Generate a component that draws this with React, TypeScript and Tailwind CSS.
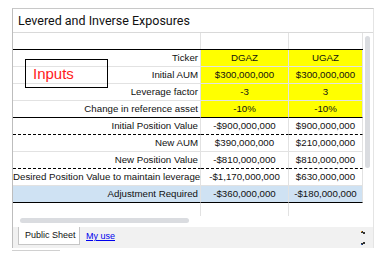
import clsx from "clsx";

type Row = {
	label: string;
	a: string;
	b: string;
	fill?: "yellow" | "blue";
	line: "gray" | "black" | "dashed";
};

const rows: Row[] = [
	{ label: "Ticker", a: "DGAZ", b: "UGAZ", fill: "yellow", line: "gray" },
	{ label: "Initial AUM", a: "$300,000,000", b: "$300,000,000", fill: "yellow", line: "gray" },
	{ label: "Leverage factor", a: "-3", b: "3", fill: "yellow", line: "gray" },
	{ label: "Change in reference asset", a: "-10%", b: "-10%", fill: "yellow", line: "black" },
	{ label: "Initial Position Value", a: "-$900,000,000", b: "$900,000,000", line: "dashed" },
	{ label: "New AUM", a: "$390,000,000", b: "$210,000,000", line: "gray" },
	{ label: "New Position Value", a: "-$810,000,000", b: "$810,000,000", line: "dashed" },
	{ label: "Desired Position Value to maintain leverage", a: "-$1,170,000,000", b: "$630,000,000", line: "gray" },
	{ label: "Adjustment Required", a: "-$360,000,000", b: "-$180,000,000", fill: "blue", line: "black" },
];

// One spreadsheet row: label column plus the two ticker columns
function SheetRow({ row }: { row: Row }) {
	const cell = clsx(
		"h-[17px] border-b border-r border-r-[#e2e2e2] leading-[16px] text-center",
		row.line === "gray" && "border-b-[#e2e2e2]",
		row.line === "black" && "border-b-black",
		row.line === "dashed" && "border-b-black [border-bottom-style:dashed]",
	);
	const value = clsx(cell, row.fill === "yellow" && "bg-[#ffff00]", row.fill === "blue" && "bg-[#cfe2f3]");

	return (
		<div className="flex">
			<div className={ clsx(cell, "w-[188px] !text-right pr-[2px] whitespace-nowrap", row.fill === "blue" && "bg-[#cfe2f3]") }>{ row.label }</div>
			<div className={ clsx(value, "w-[88px]") }>{ row.a }</div>
			<div className={ clsx(value, "w-[74px]") }>{ row.b }</div>
		</div>
	);
}

export default function App() {
	return (
		<div className="w-[384px] h-[258px] bg-white pt-2 pl-3 font-['Liberation_Sans',Arial,sans-serif] text-[#111]">

			{/* Embedded sheet widget */}
			<div className="w-[362px] border-l border-t border-r border-l-[#bdbdbd] border-t-[#c8c8c8] border-r-[#e4e4e4]">

				{/* Title */}
				<div className="h-[24px] border-b border-[#d9d9d9] pl-[5px] pt-[4px] text-[12.5px] leading-[16px] font-['Roboto',Arial,sans-serif]">
					Levered and Inverse Exposures
				</div>

				<div className="flex">

					{/* Grid */}
					<div className="relative w-[350px] text-[9.7px]">
						<div className="flex h-[17px] border-b border-black">
							<div className="w-[188px] border-r border-[#e2e2e2]" />
							<div className="w-[88px] border-r border-[#e2e2e2]" />
							<div className="w-[74px] border-r border-[#e2e2e2]" />
						</div>
						{ rows.map(row => <SheetRow key={ row.label } row={ row } />) }
						<div className="flex h-[13px]">
							<div className="w-[188px] border-r border-[#e2e2e2]" />
							<div className="w-[88px] border-r border-[#e2e2e2]" />
						</div>

						{/* Drawn "Inputs" box */}
						<div className="absolute left-[12px] top-[26px] w-[83px] h-[29px] border border-black pl-[7px] pt-[6px] text-[15px] leading-[16px] text-[#ff1a1a]">
							Inputs
						</div>
					</div>

					{/* Vertical scrollbar */}
					<div className="pl-[2px] pt-[3px]">
						<div className="w-[5px] h-[132px] rounded-full bg-[#dadce0]" />
					</div>
				</div>

				{/* Horizontal scrollbar */}
				<div className="h-[10px] pl-[7px] pt-[2px]">
					<div className="w-[169px] h-[5px] rounded-full bg-[#dadce0]" />
				</div>

				{/* Sheet tabs */}
				<div className="mt-[1px] h-[21px] bg-[#f1f1f1] flex items-start pl-[5px] text-[9px] relative">
					<div className="h-[18px] w-[62px] bg-white border border-[#c6c6c6] border-t-0 leading-[16px] pl-[6px]">Public Sheet</div>
					<div className="ml-[6px] leading-[18px] text-[#0000ee] underline">My use</div>
					<div className="absolute right-[8px] top-[4px] flex flex-col gap-[8px]">
						<svg width="4" height="3" viewBox="0 0 4 3"><path d="M0 0h2v1h2v2H2V2H0z" fill="#333" /><rect x="0" y="0" width="1" height="1" fill="#f0a020" /></svg>
						<svg width="4" height="3" viewBox="0 0 4 3"><path d="M2 0h2v2H2v1H0V1h2z" fill="#333" /><rect x="0" y="2" width="1" height="1" fill="#2060d0" /></svg>
					</div>
				</div>
			</div>
			<div className="w-[48px] h-px bg-[#d0d0d0] mt-[2px]" />
		</div>
	);
}
